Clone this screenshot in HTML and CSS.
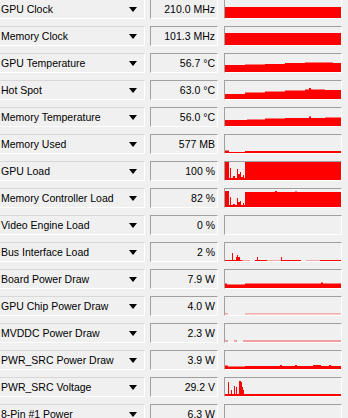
FILE: index.html
```html
<!DOCTYPE html>
<html lang="en">
<head>
  <meta charset="UTF-8">
  <title>GPU-Z Sensors</title>
  <link rel="stylesheet" href="styles.css">
</head>
<body>
  <div class="sensors">
    <div class="row">
      <div class="label">GPU Clock<span class="arrow"></span></div>
      <div class="value">210.0 MHz</div>
      <div class="graph"><svg viewBox="0 0 116 18" preserveAspectRatio="none"><rect x="0" y="7" width="116" height="11"/></svg></div>
    </div>
    <div class="row">
      <div class="label">Memory Clock<span class="arrow"></span></div>
      <div class="value">101.3 MHz</div>
      <div class="graph"><svg viewBox="0 0 116 18" preserveAspectRatio="none"><rect x="0" y="6" width="116" height="12"/></svg></div>
    </div>
    <div class="row">
      <div class="label">GPU Temperature<span class="arrow"></span></div>
      <div class="value">56.7 °C</div>
      <div class="graph"><svg viewBox="0 0 116 18" preserveAspectRatio="none"><polygon points="0,18 0,11 20,11 20,10.5 40,10.5 40,10 60,10 60,9 80,9 80,8.5 100,8.5 108,8.5 108,9 116,9 116,18"/></svg></div>
    </div>
    <div class="row">
      <div class="label">Hot Spot<span class="arrow"></span></div>
      <div class="value">63.0 °C</div>
      <div class="graph"><svg viewBox="0 0 116 18" preserveAspectRatio="none"><polygon points="0,18 0,13 20,13 20,11.5 40,11.5 40,10.5 60,10.5 60,9.5 80,9.5 80,8.5 84,8.5 84,7 86,7 86,8.5 100,8.5 100,9 116,9 116,18"/></svg></div>
    </div>
    <div class="row">
      <div class="label">Memory Temperature<span class="arrow"></span></div>
      <div class="value">56.0 °C</div>
      <div class="graph"><svg viewBox="0 0 116 18" preserveAspectRatio="none"><polygon points="0,18 0,12 22,12 22,11.5 40,11.5 40,10.5 60,10.5 60,10 84,10 84,8.5 86,8.5 86,10 100,10 100,9.5 116,9.5 116,18"/></svg></div>
    </div>
    <div class="row">
      <div class="label">Memory Used<span class="arrow"></span></div>
      <div class="value">577 MB</div>
      <div class="graph"><svg viewBox="0 0 116 18" preserveAspectRatio="none"><polygon points="0,18 0,15.5 4,15.5 4,17 20,17 20,16 116,16 116,18"/></svg></div>
    </div>
    <div class="row">
      <div class="label">GPU Load<span class="arrow"></span></div>
      <div class="value">100 %</div>
      <div class="graph"><svg viewBox="0 0 116 18" preserveAspectRatio="none"><polygon points="0,18 0,0 4,0 4,16 5,16 5,6 6,6 6,16 8,16 8,14 10,14 10,16 12,16 12,7 13,7 13,12 15,12 15,10 16,10 16,15 18,15 18,13 19,13 19,16 20,16 20,0 116,0 116,18"/></svg></div>
    </div>
    <div class="row">
      <div class="label">Memory Controller Load<span class="arrow"></span></div>
      <div class="value">82 %</div>
      <div class="graph"><svg viewBox="0 0 116 18" preserveAspectRatio="none"><polygon points="0,18 0,2 4,2 4,16 5,16 5,8 6,8 6,16 8,16 8,15 10,15 10,16 12,16 12,9 13,9 13,13 15,13 15,12 16,12 16,16 18,16 18,14 19,14 19,16 20,16 20,3 50,3 50,2 52,2 52,3 70,3 70,2.5 72,2.5 72,3 116,3 116,18"/></svg></div>
    </div>
    <div class="row">
      <div class="label">Video Engine Load<span class="arrow"></span></div>
      <div class="value">0 %</div>
      <div class="graph"></div>
    </div>
    <div class="row">
      <div class="label">Bus Interface Load<span class="arrow"></span></div>
      <div class="value">2 %</div>
      <div class="graph"><svg viewBox="0 0 116 18" preserveAspectRatio="none"><polygon points="0,18 0,17 7,17 7,10 8,10 8,17 11,17 11,14 12,14 12,12 13,12 13,14 15,14 15,17 17,17 17,18"/><rect class="lt" x="17" y="17" width="8" height="1"/><rect x="30" y="17" width="12" height="1"/><rect x="32" y="14" width="1" height="3"/><rect class="lt" x="42" y="17" width="14" height="1"/><rect x="56" y="14" width="1" height="4"/><rect x="57" y="17" width="19" height="1"/><rect class="lt" x="81" y="17" width="14" height="1"/><rect x="95" y="17" width="21" height="1"/></svg></div>
    </div>
    <div class="row">
      <div class="label">Board Power Draw<span class="arrow"></span></div>
      <div class="value">7.9 W</div>
      <div class="graph"><svg viewBox="0 0 116 18" preserveAspectRatio="none"><polygon points="0,18 0,13.5 2,13.5 2,14.5 20,14.5 20,13.5 96,13.5 96,12.5 98,12.5 98,13.5 116,13.5 116,18"/></svg></div>
    </div>
    <div class="row">
      <div class="label">GPU Chip Power Draw<span class="arrow"></span></div>
      <div class="value">4.0 W</div>
      <div class="graph"><svg viewBox="0 0 116 18" preserveAspectRatio="none"><rect class="lt" x="0" y="16" width="3" height="1.5"/><rect class="lt" x="20" y="16.2" width="96" height="1.3"/></svg></div>
    </div>
    <div class="row">
      <div class="label">MVDDC Power Draw<span class="arrow"></span></div>
      <div class="value">2.3 W</div>
      <div class="graph"><svg viewBox="0 0 116 18" preserveAspectRatio="none"><rect class="md" x="0" y="16.5" width="3" height="1"/><rect class="md" x="9" y="16.5" width="3" height="1"/><rect class="md" x="18" y="16.5" width="98" height="1"/></svg></div>
    </div>
    <div class="row">
      <div class="label">PWR_SRC Power Draw<span class="arrow"></span></div>
      <div class="value">3.9 W</div>
      <div class="graph"><svg viewBox="0 0 116 18" preserveAspectRatio="none"><polygon points="0,18 0,14.5 3,14.5 3,15.5 20,15.5 20,15 55,15 55,14 57,14 57,15 70,15 70,14 72,14 72,15 88,15 88,14 96,14 96,15 104,15 104,14 106,14 106,15 116,15 116,18"/></svg></div>
    </div>
    <div class="row">
      <div class="label">PWR_SRC Voltage<span class="arrow"></span></div>
      <div class="value">29.2 V</div>
      <div class="graph"><svg viewBox="0 0 116 18" preserveAspectRatio="none"><polygon points="0,18 0,16 3,16 3,4 4,4 4,16 6,16 6,12 7,12 7,16 9,16 9,8 10,8 10,16 11,16 11,9 12,9 12,16 14,16 14,3 16,3 16,4 17,4 17,9 18,9 18,12 19,12 19,16 116,16 116,18"/></svg></div>
    </div>
    <div class="row">
      <div class="label">8-Pin #1 Power<span class="arrow"></span></div>
      <div class="value">6.3 W</div>
      <div class="graph"></div>
    </div>
  </div>
</body>
</html>
```

FILE: styles.css
```css
html, body {
  margin: 0;
  padding: 0;
  background: #f0f0f0;
  overflow: hidden;
}
body {
  font-family: "Liberation Sans", Arial, sans-serif;
  font-size: 10.5px;
  color: #000;
}
.sensors {
  display: flex;
  flex-direction: column;
  gap: 7px;
  margin: -1px 0 0 -2px;
}
.row {
  display: flex;
  height: 20px;
}
.label {
  width: 147px;
  box-sizing: border-box;
  display: flex;
  align-items: center;
  padding-left: 2px;
  border: 1px solid #d8d8d8;
  border-right-color: #fff;
  border-bottom-color: #fff;
  white-space: nowrap;
}
.arrow {
  margin-left: auto;
  margin-right: 7px;
  width: 0;
  height: 0;
  border-left: 4px solid transparent;
  border-right: 4px solid transparent;
  border-top: 5px solid #000;
}
.value {
  width: 68px;
  margin-left: 5px;
  box-sizing: border-box;
  display: flex;
  align-items: center;
  justify-content: flex-end;
  padding-right: 2px;
  border: 1px solid #a0a0a0;
  border-right-color: #fff;
  border-bottom-color: #fff;
}
.graph {
  width: 118px;
  margin-left: 6px;
  box-sizing: border-box;
  border: 1px solid #a0a0a0;
  border-right-color: #fff;
  border-bottom-color: #fff;
}
.graph svg {
  display: block;
  width: 116px;
  height: 18px;
  fill: #ff0000;
}
.graph .lt {
  fill: #f4a4a4;
}
.graph .md {
  fill: #ee5050;
}
```
